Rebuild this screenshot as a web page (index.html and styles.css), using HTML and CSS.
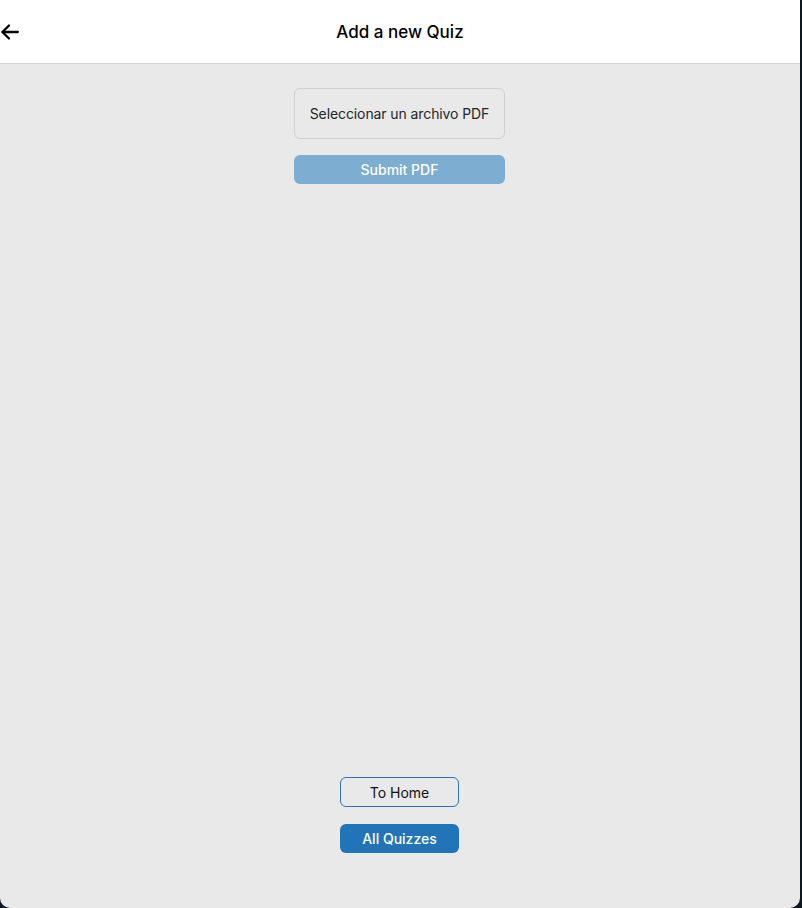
FILE: index.html
```html
<!DOCTYPE html>
<html lang="en">
<head>
<meta charset="utf-8">
<title>Add a new Quiz</title>
<link rel="stylesheet" href="styles.css">
</head>
<body>
<div class="app">
  <header class="topbar">
    <button class="back" aria-label="Back">
      <svg width="20" height="20" viewBox="0 0 20 20" fill="none" stroke="#000" stroke-width="2.3" stroke-linecap="round" stroke-linejoin="round">
        <path d="M17.8 10H2.5"/>
        <path d="M9 3.5L2.5 10L9 16.5"/>
      </svg>
    </button>
    <h1 class="title">Add a new Quiz</h1>
  </header>
  <main class="content">
    <div class="upload">
      <label class="file-btn">Seleccionar un archivo PDF</label>
      <button class="submit" disabled>Submit PDF</button>
    </div>
    <nav class="footer">
      <button class="btn-outline">To Home</button>
      <button class="btn-solid">All Quizzes</button>
    </nav>
  </main>
</div>
</body>
</html>
```
FILE: styles.css
```css
* { box-sizing: border-box; }
html, body { margin: 0; padding: 0; height: 100%; }
body {
  background: #0e1620;
  font-family: Inter, "Noto Sans", "Liberation Sans", sans-serif;
  color: #111;
}
.app {
  width: 800px;
  height: 908px;
  background: #e9e9ea;
  border-bottom-left-radius: 10px;
  border-bottom-right-radius: 10px;
  display: flex;
  flex-direction: column;
  overflow: hidden;
}
.topbar {
  height: 64px;
  background: #fff;
  border-bottom: 1px solid #d3d3d8;
  display: flex;
  align-items: center;
  justify-content: center;
  position: relative;
}
.back {
  position: absolute;
  left: 0;
  top: 22px;
  padding: 0;
  border: 0;
  background: none;
  width: 20px;
  height: 20px;
  display: flex;
}
.title {
  margin: 0;
  font-size: 17px;
  font-weight: 500;
  color: #000;
  letter-spacing: 0;
}
.content {
  flex: 1;
  display: flex;
  flex-direction: column;
  align-items: center;
  justify-content: space-between;
  padding: 24px 1px 55px 0;
}
.upload {
  display: flex;
  flex-direction: column;
  gap: 16px;
  width: 211px;
}
.file-btn {
  height: 51px;
  border: 1px solid #cfcfd4;
  border-radius: 6px;
  display: flex;
  align-items: center;
  justify-content: center;
  font-size: 14px;
  color: #23252b;
  letter-spacing: -0.1px;
}
.submit {
  height: 29px;
  border: 0;
  border-radius: 6px;
  background: #7eadd2;
  color: #fff;
  font-family: inherit;
  font-size: 14px;
  font-weight: 500;
  padding: 0;
}
.footer {
  display: flex;
  flex-direction: column;
  gap: 17px;
  width: 119px;
}
.btn-outline, .btn-solid {
  height: 30px;
  border-radius: 6px;
  font-family: inherit;
  font-size: 14px;
  padding: 0;
}
.btn-outline {
  background: transparent;
  border: 1px solid #2a76b8;
  color: #111;
}
.btn-solid {
  height: 29px;
  background: #2274b9;
  border: 0;
  color: #fff;
  font-weight: 500;
}
```
